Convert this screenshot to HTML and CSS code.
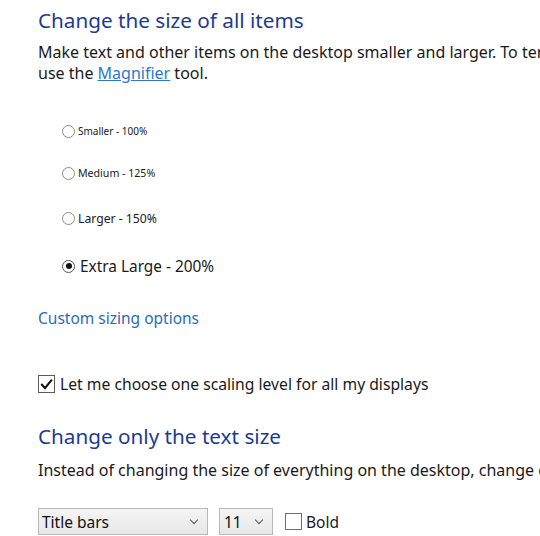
FILE: index.html
```html
<!DOCTYPE html>
<html>
<head>
<meta charset="utf-8">
<link rel="stylesheet" href="styles.css">
</head>
<body>
<div class="page">
  <h1 class="heading h-first">Change the size of all items</h1>
  <p class="desc">
    <span class="line">Make text and other items on the desktop smaller and larger. To temporarily enlarge part of the screen,</span>
    <span class="line">use the <a class="link" href="#">Magnifier</a> tool.</span>
  </p>

  <div class="radios">
    <label class="radio r-small"><span class="dot"></span><span>Smaller - 100%</span></label>
    <label class="radio r-medium"><span class="dot"></span><span>Medium - 125%</span></label>
    <label class="radio r-large"><span class="dot"></span><span>Larger - 150%</span></label>
    <label class="radio r-xl"><span class="dot checked"></span><span>Extra Large - 200%</span></label>
  </div>

  <a class="custom" href="#">Custom sizing options</a>

  <label class="check-row">
    <span class="box">
      <svg width="13" height="13" viewBox="0 0 13 13"><path d="M2 6.8 L5 10.2 L11.2 2.4" fill="none" stroke="#111" stroke-width="2.1" stroke-linecap="square" stroke-linejoin="miter"/></svg>
    </span>
    <span>Let me choose one scaling level for all my displays</span>
  </label>

  <h2 class="heading h-second">Change only the text size</h2>
  <p class="desc2"><span class="line">Instead of changing the size of everything on the desktop, change only the text size for a specific item.</span></p>

  <div class="controls">
    <div class="select sel-item"><span>Title bars</span><span class="chev"></span></div>
    <div class="select sel-size"><span>11</span><span class="chev"></span></div>
    <label class="bold-row"><span class="box empty"></span><span>Bold</span></label>
  </div>
</div>
</body>
</html>
```

FILE: styles.css
```css
html, body {
  margin: 0;
  padding: 0;
  background: #ffffff;
}
body {
  width: 540px;
  height: 536px;
  overflow: hidden;
  font-family: "Noto Sans", "Open Sans", sans-serif;
  color: #1a1a1a;
}
.page {
  padding-left: 38px;
}
.heading {
  margin: 0;
  font-weight: 400;
  color: #1d3b8e;
  font-size: 20.7px;
  line-height: 28px;
  white-space: nowrap;
}
.h-first {
  padding-top: 6px;
}
.desc {
  margin: 8px 0 0 0;
  font-size: 16px;
  line-height: 21px;
}
.line {
  display: block;
  white-space: nowrap;
}
.link {
  color: #2e78cc;
  text-decoration: underline;
}
.radios {
  display: flex;
  flex-direction: column;
  padding-left: 24px;
  margin-top: 39px;
}
.radio {
  display: flex;
  align-items: center;
  gap: 3px;
  color: #1a1a1a;
}
.dot {
  width: 13px;
  height: 13px;
  border: 1px solid #8c8c8c;
  border-radius: 50%;
  box-sizing: border-box;
  background: #fff;
  position: relative;
  flex: none;
}
.dot.checked {
  border-color: #555;
}
.dot.checked::after {
  content: "";
  position: absolute;
  left: 2.5px;
  top: 2.5px;
  width: 6px;
  height: 6px;
  border-radius: 50%;
  background: #111;
}
.r-small { font-size: 10px; height: 16px; }
.r-medium { font-size: 10.6px; height: 16px; margin-top: 26px; }
.r-large { font-size: 12.2px; height: 18px; margin-top: 28px; }
.r-xl { font-size: 15.4px; height: 22px; margin-top: 28px; gap: 5px; }
.custom {
  display: block;
  margin-top: 30px;
  color: #2c6cb4;
  font-size: 15.5px;
  line-height: 22px;
  text-decoration: none;
}
.check-row {
  display: flex;
  align-items: center;
  gap: 5px;
  margin-top: 44px;
  height: 22px;
  font-size: 15.7px;
  line-height: 22px;
}
.box {
  width: 17px;
  height: 18px;
  border: 1px solid #5a5a5a;
  box-sizing: border-box;
  background: #fff;
  display: flex;
  align-items: center;
  justify-content: center;
  flex: none;
}
.box.empty {
  width: 17px;
  height: 17px;
  border-color: #707070;
}
.h-second {
  margin-top: 27px;
}
.desc2 {
  margin: 10px 0 0 0;
  font-size: 16px;
  line-height: 21px;
}
.controls {
  display: flex;
  align-items: center;
  margin-top: 27px;
}
.select {
  height: 27px;
  box-sizing: border-box;
  border: 1px solid #b8b8b8;
  background: linear-gradient(#f5f5f5, #e7e7e7);
  display: flex;
  align-items: center;
  justify-content: space-between;
  padding: 0 10px 0 3px;
  font-size: 15.5px;
  color: #111;
}
.sel-item { width: 170px; }
.sel-size { width: 54px; margin-left: 11px; padding-left: 4px; }
.chev {
  width: 5px;
  height: 5px;
  border-right: 1.2px solid #555;
  border-bottom: 1.2px solid #555;
  transform: rotate(45deg);
  margin-top: -4px;
}
.bold-row {
  display: flex;
  align-items: center;
  gap: 4px;
  margin-left: 12px;
  font-size: 15.5px;
}
```
